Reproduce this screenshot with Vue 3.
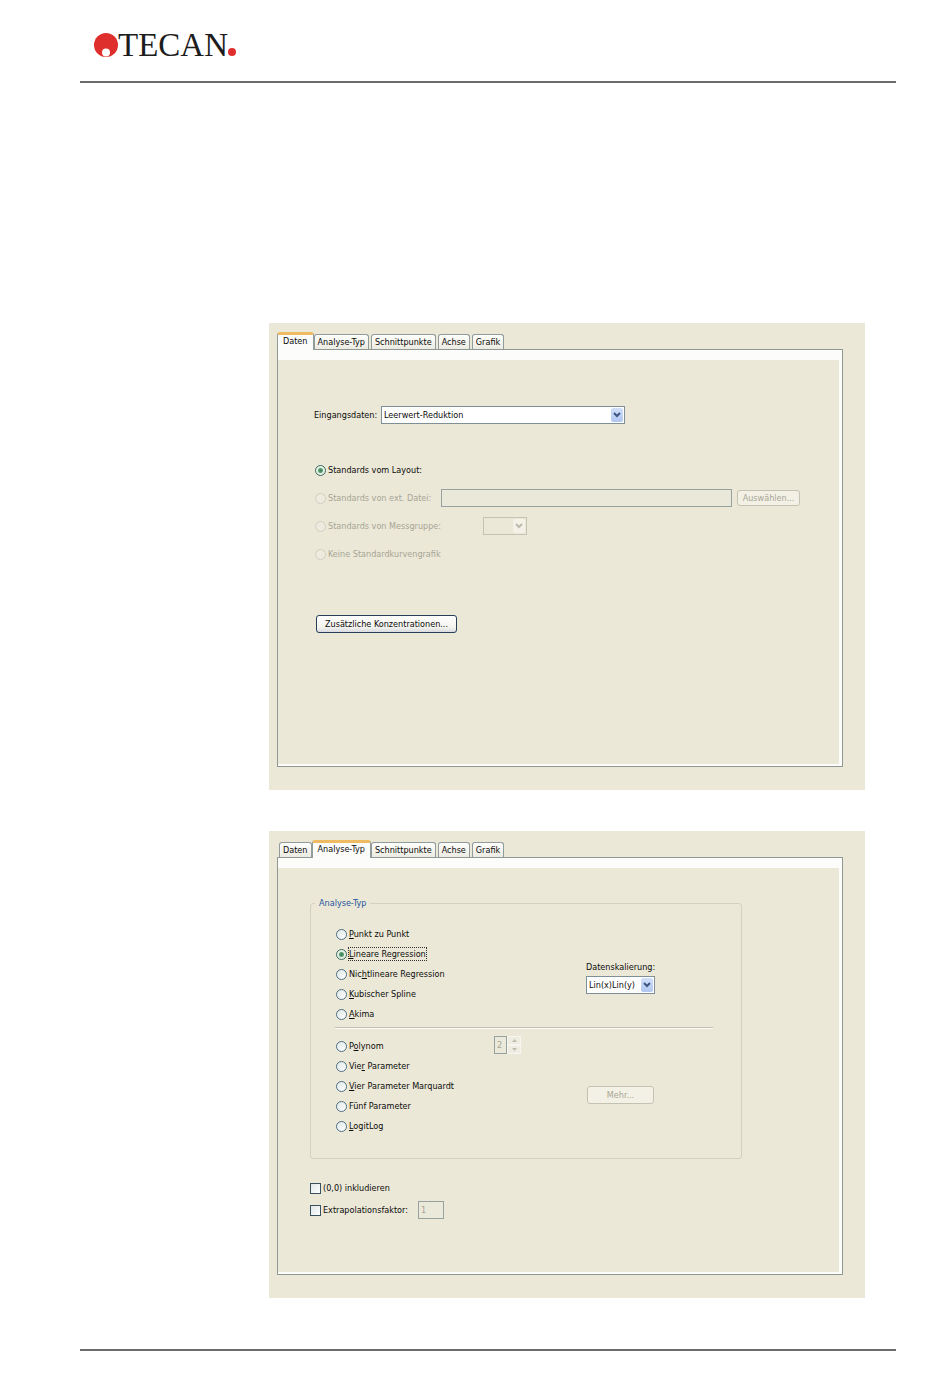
<script setup>
import { ref } from 'vue'

const tabs = ['Daten', 'Analyse-Typ', 'Schnittpunkte', 'Achse', 'Grafik']

const source = ref('layout')
const analysis = ref('linear')
const includeOrigin = ref(false)
const extrapolate = ref(false)

const simpleTypes = [
  { id: 'punkt', label: ['', 'P', 'unkt zu Punkt'] },
  { id: 'linear', label: ['', 'L', 'ineare Regression'] },
  { id: 'nichtlinear', label: ['Nic', 'h', 'tlineare Regression'] },
  { id: 'spline', label: ['', 'K', 'ubischer Spline'] },
  { id: 'akima', label: ['', 'A', 'kima'] },
]
const parameterTypes = [
  { id: 'polynom', label: ['P', 'o', 'lynom'] },
  { id: 'vier', label: ['Vie', 'r', ' Parameter'] },
  { id: 'marquardt', label: ['', 'V', 'ier Parameter Marquardt'] },
  { id: 'fuenf', label: ['Fünf Parameter', '', ''] },
  { id: 'logit', label: ['', 'L', 'ogitLog'] },
]
</script>

<template>
  <div class="page">
    <header class="header">
      <div class="logo">
        <svg class="mark" width="24" height="24" viewBox="0 0 24 24" aria-hidden="true">
          <circle cx="12" cy="12" r="12" fill="#df2f2c" />
          <circle cx="12" cy="19.5" r="4" fill="#fff" />
        </svg>
        <span class="word">TECAN</span>
        <svg class="dot" width="8" height="8" viewBox="0 0 8 8" aria-hidden="true">
          <circle cx="4" cy="4" r="4" fill="#df2f2c" />
        </svg>
      </div>
    </header>

    <main class="panels">
      <section class="panel">
        <div class="tabs" role="tablist">
          <button
            v-for="(t, i) in tabs"
            :key="t"
            type="button"
            role="tab"
            class="tab"
            :class="{ active: i === 0 }"
            :aria-selected="i === 0"
          >{{ t }}</button>
        </div>
        <div class="pane data-pane">
          <div class="input-row">
            <label for="input-data">Eingangsdaten:</label>
            <span class="combo wide">
              <select id="input-data"><option>Leerwert-Reduktion</option></select>
              <span class="arrow"><svg width="8" height="6" viewBox="0 0 8 6"><path d="M1 1l3 3 3-3" /></svg></span>
            </span>
          </div>

          <div class="sources">
            <div class="source">
              <label class="choice"><input v-model="source" type="radio" name="source" value="layout" />Standards vom Layout:</label>
            </div>
            <div class="source">
              <label class="choice off file-label"><input v-model="source" type="radio" name="source" value="file" disabled />Standards von ext. Datei:</label>
              <input class="field file" type="text" aria-label="Externe Datei" disabled />
              <button class="btn pick" type="button" disabled>Auswählen...</button>
            </div>
            <div class="source">
              <label class="choice off group-label"><input v-model="source" type="radio" name="source" value="group" disabled />Standards von Messgruppe:</label>
              <span class="combo small off">
                <select aria-label="Messgruppe" disabled><option></option></select>
                <span class="arrow"><svg width="8" height="6" viewBox="0 0 8 6"><path d="M1 1l3 3 3-3" /></svg></span>
              </span>
            </div>
            <div class="source">
              <label class="choice off"><input v-model="source" type="radio" name="source" value="none" disabled />Keine Standardkurvengrafik</label>
            </div>
          </div>

          <button class="btn primary" type="button">Zusätzliche Konzentrationen...</button>
        </div>
      </section>

      <section class="panel">
        <div class="tabs" role="tablist">
          <button
            v-for="(t, i) in tabs"
            :key="t"
            type="button"
            role="tab"
            class="tab"
            :class="{ active: i === 1 }"
            :aria-selected="i === 1"
          >{{ t }}</button>
        </div>
        <div class="pane analysis-pane">
          <fieldset class="group">
            <legend>Analyse-Typ</legend>
            <div class="types">
              <div class="list">
                <label v-for="o in simpleTypes" :key="o.id" class="choice">
                  <input v-model="analysis" type="radio" name="analysis" :value="o.id" />
                  <span class="caption" :class="{ focused: analysis === o.id }">{{ o.label[0] }}<u>{{ o.label[1] }}</u>{{ o.label[2] }}</span>
                </label>
              </div>
              <div class="scaling">
                <label for="scaling">Datenskalierung:</label>
                <span class="combo">
                  <select id="scaling"><option>Lin(x)Lin(y)</option></select>
                  <span class="arrow"><svg width="8" height="6" viewBox="0 0 8 6"><path d="M1 1l3 3 3-3" /></svg></span>
                </span>
              </div>
            </div>
            <hr class="rule" />
            <div class="types">
              <div class="list">
                <div v-for="o in parameterTypes" :key="o.id" class="line">
                  <label class="choice">
                    <input v-model="analysis" type="radio" name="analysis" :value="o.id" />
                    <span class="caption">{{ o.label[0] }}<u>{{ o.label[1] }}</u>{{ o.label[2] }}</span>
                  </label>
                  <span v-if="o.id === 'polynom'" class="spinner">
                    <input class="field degree" type="text" value="2" aria-label="Grad" disabled />
                    <span class="steps">
                      <button type="button" aria-label="Erhöhen" disabled><svg width="5" height="3" viewBox="0 0 5 3"><path d="M0 3l2.5-3L5 3z" /></svg></button>
                      <button type="button" aria-label="Verringern" disabled><svg width="5" height="3" viewBox="0 0 5 3"><path d="M0 0l2.5 3L5 0z" /></svg></button>
                    </span>
                  </span>
                </div>
              </div>
              <button class="btn more" type="button" disabled>Mehr...</button>
            </div>
          </fieldset>

          <div class="checks">
            <label class="choice"><input v-model="includeOrigin" type="checkbox" />(0,0) inkludieren</label>
            <div class="factor">
              <label class="choice"><input v-model="extrapolate" type="checkbox" />Extrapolationsfaktor:</label>
              <input class="field" type="text" value="1" aria-label="Extrapolationsfaktor" disabled />
            </div>
          </div>
        </div>
      </section>
    </main>

    <footer class="footer"></footer>
  </div>
</template>

<style>
body {
  background: #fff;
}
</style>

<style scoped>
.page {
  padding: 0 54px 26px 80px;
  font-family: "DejaVu Sans Condensed", "Noto Sans", sans-serif;
  font-size: 9px;
  line-height: 12px;
  color: #0c0c0a;
}
.page *,
.page {
  box-sizing: border-box;
}
button,
input,
select {
  font: inherit;
  color: inherit;
  margin: 0;
}
.header {
  height: 83px;
  padding: 28px 0 0 14px;
  border-bottom: 2px solid #6c6c6c;
}
.logo {
  display: flex;
  align-items: center;
}
.word {
  font-family: "Liberation Serif", serif;
  font-size: 33px;
  line-height: 34px;
  color: #1d1d1d;
}
.dot {
  margin-top: 14px;
}
.panels {
  display: grid;
  gap: 41px;
  padding: 240px 31px 51px 189px;
}
.panel {
  padding: 9px 22px 23px 8px;
  background: #ebe8d8;
}
.tabs {
  display: flex;
  align-items: flex-end;
  height: 17px;
  padding-left: 2px;
  gap: 2px;
}
.tab {
  height: 15px;
  padding: 0 3px;
  border: 1px solid #919b9c;
  border-bottom: 0;
  border-radius: 3px 3px 0 0;
  background: linear-gradient(#fefefc, #ecebe2);
  white-space: nowrap;
}
.tab.active {
  position: relative;
  height: 18px;
  margin: 0 -2px -1px;
  padding: 0 5px 4px;
  border-top: 3px solid #eebb62;
  background: #fcfcfa;
}
.pane {
  min-height: 418px;
  border: 1px solid #8f9894;
  box-shadow: inset 0 10px #fcfcfb, inset -3px -2px #fcfcfb;
}
.data-pane {
  padding: 56px 42px 0 36px;
}
.input-row {
  display: flex;
  align-items: center;
}
.input-row label {
  width: 67px;
  white-space: nowrap;
}
.combo {
  position: relative;
  display: block;
  height: 18px;
}
.combo select {
  display: block;
  width: 100%;
  height: 100%;
  padding: 0 16px 0 2px;
  border: 1px solid #7f8f98;
  border-radius: 0;
  appearance: none;
  background: #fff;
}
.arrow {
  position: absolute;
  top: 2px;
  right: 2px;
  bottom: 2px;
  display: grid;
  place-items: center;
  width: 12px;
  border-radius: 2px;
  background: linear-gradient(#d2e0fa, #b0c6ef);
  pointer-events: none;
}
.arrow path {
  fill: none;
  stroke: #3f5685;
  stroke-width: 2;
}
.wide {
  width: 244px;
}
.small {
  width: 44px;
}
.combo.off select {
  background: #ebe8d8;
  border-color: #c3c4b4;
  opacity: 1;
}
.combo.off .arrow {
  background: #f3f1e8;
}
.combo.off path {
  stroke: #bcbcae;
}
.sources {
  margin: 32px 0 47px;
}
.source {
  display: flex;
  align-items: center;
  height: 28px;
}
.choice {
  display: flex;
  align-items: center;
  gap: 2px;
  white-space: nowrap;
}
.choice input {
  flex: none;
  width: 11px;
  height: 11px;
  border: 1px solid #4f6f80;
  appearance: none;
  background: linear-gradient(135deg, #dfe6e6, #fff);
}
.choice input[type="radio"] {
  border-radius: 50%;
}
.choice input[type="radio"]:checked {
  border-color: #3a6a62;
  background: radial-gradient(circle, #3f8058 0, #5a9c74 2px, #e4efe2 3px);
}
.sources input[type="radio"] {
  margin-left: 1px;
}
.choice.off {
  color: #a7a594;
}
.choice.off input {
  border-color: #d0cebe;
  background: #edebdf;
}
.file-label {
  width: 127px;
}
.group-label {
  width: 169px;
}
.field {
  height: 18px;
  padding: 0 2px;
  border: 1px solid #97a19f;
  border-radius: 0;
  background: #ebe9da;
  color: #a7a594;
}
.file {
  flex: 1;
  min-width: 0;
  background: #e9e8d9;
}
.btn {
  height: 18px;
  padding: 0 4px;
  border: 1px solid #26405a;
  border-radius: 3px;
  background: linear-gradient(#fff, #f4f3ee 70%, #d9dbe0);
  white-space: nowrap;
}
.btn:disabled {
  border-color: #c4c3b2;
  background: #f3f1e6;
  color: #a7a594;
}
.pick {
  width: 63px;
  height: 16px;
  margin-left: 5px;
}
.primary {
  width: 141px;
  margin-left: 2px;
}
.analysis-pane {
  padding: 39px 100px 0 32px;
}
.group {
  min-width: 0;
  margin: 0;
  padding: 15px 28px 22px 24px;
  border: 1px solid #d3d1c0;
  border-radius: 3px;
}
.group legend {
  margin-left: -20px;
  padding: 0 4px;
  color: #26549b;
}
.types {
  display: flex;
  padding-left: 1px;
}
.list {
  width: 250px;
}
.list .choice {
  height: 20px;
}
.line {
  display: flex;
  justify-content: space-between;
  padding-right: 65px;
}
.caption {
  white-space: pre;
}
.focused {
  outline: 1px dotted #333;
}
.scaling {
  width: 69px;
  padding-top: 37px;
}
.scaling label {
  display: block;
  height: 15px;
  white-space: nowrap;
}
.rule {
  height: 2px;
  margin: 3px 0 7px;
  border: 0;
  border-top: 1px solid #c3c2b0;
  border-bottom: 1px solid #fbfaf5;
}
.spinner {
  display: flex;
  height: 18px;
}
.degree {
  width: 13px;
}
.steps {
  display: grid;
  width: 14px;
  background: #f4f3ec;
}
.steps button {
  display: grid;
  place-items: center;
  padding: 0;
  border: 1px solid #f6f5ef;
  background: #efede2;
}
.steps path {
  fill: #bdbcae;
}
.more {
  width: 67px;
  margin: 50px 0 0 1px;
}
.checks {
  margin-top: 18px;
}
.checks .choice {
  height: 22px;
}
.checks .choice input {
  border-color: #39505e;
}
.factor {
  display: flex;
  align-items: center;
}
.factor .choice {
  width: 108px;
}
.factor .field {
  width: 26px;
}
.footer {
  border-top: 2px solid #6c6c6c;
}
</style>
